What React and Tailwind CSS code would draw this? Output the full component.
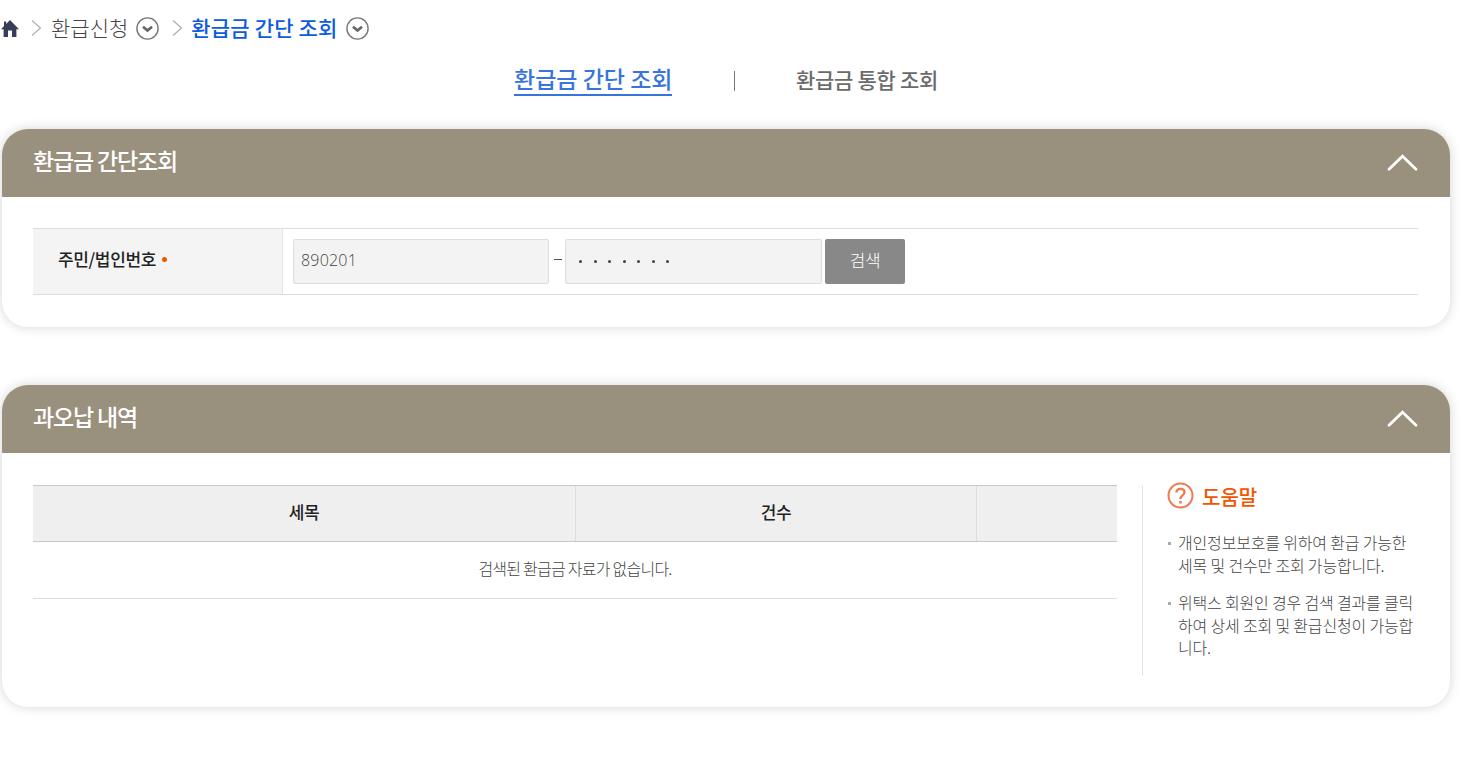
import { useState } from "react";

const Chevron = () => (
  <svg className="w-[11px] h-[18px]" viewBox="0 0 11 18" fill="none" stroke="#aaaaaa" strokeWidth="1.1">
    <path d="M1 1.5 9.5 9 1 16.5" />
  </svg>
);

const DropButton = () => (
  <button className="w-[23px] h-[23px]">
    <svg className="w-[23px] h-[23px]" viewBox="0 0 23 23" fill="none">
      <circle cx="11.5" cy="11.5" r="10.6" stroke="#777777" strokeWidth="1.4" />
      <path d="M7 9.8 11.5 13.6 16 9.8" stroke="#666666" strokeWidth="2.7" />
    </svg>
  </button>
);

const Panel = ({ title, className, children }) => {
  const [open, setOpen] = useState(true);

  return (
    <section className={`rounded-[26px] bg-white overflow-hidden shadow-[0_0_12px_rgba(0,0,0,0.17)] ${open ? className : ""}`}>
      <div className="h-[68px] pl-[31px] pr-8 bg-[#9a907e] flex items-center justify-between">
        <h2 className="text-[23px] leading-8 font-medium tracking-[-1.15px] text-white pb-[7px]">{title}</h2>
        <button onClick={() => setOpen(!open)}>
          <svg className={`w-[32px] h-[18px] ${open ? "" : "rotate-180"}`} viewBox="0 0 32 18" fill="none" stroke="#ffffff" strokeWidth="2.7" strokeLinecap="round">
            <path d="M3 15.3 16.5 2.2 30 15.3" />
          </svg>
        </button>
      </div>
      {open && children}
    </section>
  );
};

const helpItems = [
  "개인정보보호를 위하여 환급 가능한 세목 및 건수만 조회 가능합니다.",
  "위택스 회원인 경우 검색 결과를 클릭하여 상세 조회 및 환급신청이 가능합니다.",
];

const App = () => {
  const [front, setFront] = useState("890201");
  const [back, setBack] = useState("0000000");

  return (
    <div className="min-h-screen bg-white overflow-hidden font-['Noto_Sans_CJK_KR','Noto_Sans',sans-serif] text-[#444444]">
      {/* Breadcrumb */}
      <nav className="h-[56px] flex items-center text-[21px] leading-8">
        <svg className="w-[18px] h-[17px] ml-px" viewBox="0 0 18 17" fill="#353d58">
          <path d="M9 0 18 9.2H15.4V17H11V10.5H7V17H2.6V9.2H0L3 6V1.5H5.2V3.9Z" />
        </svg>
        <span className="ml-3 flex"><Chevron /></span>
        <a className="ml-[9px] pb-[3px] font-light">환급신청</a>
        <span className="ml-2 flex"><DropButton /></span>
        <span className="ml-[13px] flex"><Chevron /></span>
        <a className="ml-2 pb-[3px] font-medium tracking-[0.18px] text-[#0c5be0]">환급금 간단 조회</a>
        <span className="ml-2 flex"><DropButton /></span>
      </nav>

      {/* Tabs */}
      <div className="h-[73px] pl-[514px] pt-2 flex items-start">
        <a className="h-8 w-[158px] whitespace-nowrap border-b-2 border-[#3774dd] text-[23px] leading-[28px] font-medium text-[#3774dd]">환급금 간단 조회</a>
        <span className="mt-[7px] ml-[62px] w-px h-5 bg-[#777777]" />
        <a className="ml-[61px] text-[21px] leading-[30px] font-medium tracking-[-0.3px] text-[#6b6b6b]">환급금 통합 조회</a>
      </div>

      <main className="ml-0.5 w-[1448px]">
        <Panel title="환급금 간단조회" className="h-[198px]">
          <div className="mx-[31px] mr-8 mt-[31px] h-[67px] border-y border-[#dddddd] flex">
            <div className="w-[250px] pl-[25px] bg-[#f4f4f4] border-r border-[#e5e5e5] flex items-center">
              <label className="pb-[5px] text-[17px] font-medium tracking-[-0.35px] text-[#222222]">주민/법인번호</label>
              <span className="ml-[6px] mb-[5px] w-[5px] h-[5px] rounded-full bg-[#f25500]" />
            </div>
            <div className="pl-2.5 flex items-center text-base font-light">
              <input
                value={front}
                onChange={(e) => setFront(e.target.value)}
                className="w-[256px] h-[45px] px-[7px] pb-[3px] rounded-xs border border-[#dddddd] bg-[#f3f3f3] font-['Open_Sans',sans-serif] text-base tracking-[0.2px] outline-none"
              />
              <span className="w-4 flex justify-center">
                <span className="mb-[5px] ml-0.5 w-2 h-px bg-[#555555]" />
              </span>
              <div className="relative">
                <input
                  type="password"
                  value={back}
                  onChange={(e) => setBack(e.target.value)}
                  className="block w-[257px] h-[45px] rounded-xs border border-[#dddddd] bg-[#f3f3f3] text-transparent outline-none"
                />
                <div className="absolute left-3.5 top-[21px] flex gap-[11.5px] pointer-events-none">
                  {back.split("").map((_, i) => (
                    <span key={i} className="w-[3px] h-[3px] rounded-full bg-[#444444]" />
                  ))}
                </div>
              </div>
              <button className="ml-[3px] w-20 h-[45px] pb-1 rounded-xs bg-[#888888] text-[17px] tracking-[-0.3px] text-white">검색</button>
            </div>
          </div>
        </Panel>

        <div className="h-[58px]" />

        <Panel title="과오납 내역" className="h-[322px]">
          <div className="pl-[31px] pt-8 flex">
            <div className="w-[1084px]">
              <div className="h-[57px] border-y border-[#c8c8c8] bg-[#efefef] flex text-[17px] leading-[51px] text-center font-medium tracking-[-0.5px] text-[#222222]">
                <div className="w-[543px] border-r border-[#dddddd]">세목</div>
                <div className="w-[401px] border-r border-[#dddddd]">건수</div>
                <div className="flex-1" />
              </div>
              <div className="h-[57px] border-b border-[#dddddd] text-base leading-[52px] text-center font-light tracking-[-0.75px]">
                검색된 환급금 자료가 없습니다.
              </div>
            </div>

            {/* Help */}
            <aside className="ml-[25px] w-[280px] h-[191px] pl-[25px] border-l border-[#e5e5e5]">
              <div className="-mt-1 -ml-px flex items-center">
                <svg className="w-[27px] h-[27px]" viewBox="0 0 27 27" fill="none" stroke="#ef7950" strokeWidth="2">
                  <circle cx="13.5" cy="13.5" r="12" />
                  <path d="M9.5 10.6C9.5 8 11.2 6.8 13.5 6.8S17.5 8.2 17.5 10.3C17.5 13.2 13.5 13.2 13.5 17" strokeWidth="2.3" />
                  <path d="M13.5 19V21.5" strokeWidth="2.6" />
                </svg>
                <h3 className="ml-2 pt-0.5 text-xl leading-[27px] font-medium text-[#f25500]">도움말</h3>
              </div>
              <ul className="mt-[21px] w-[248px] text-base leading-[22.5px] font-light tracking-[-0.17px]">
                {helpItems.map((item) => (
                  <li key={item} className="mb-[15px] flex">
                    <span className="mt-[11px] mr-[7px] w-[3px] h-[3px] shrink-0 bg-[#aaaaaa]" />
                    <span>{item}</span>
                  </li>
                ))}
              </ul>
            </aside>
          </div>
        </Panel>
      </main>
    </div>
  );
};

export default App;
